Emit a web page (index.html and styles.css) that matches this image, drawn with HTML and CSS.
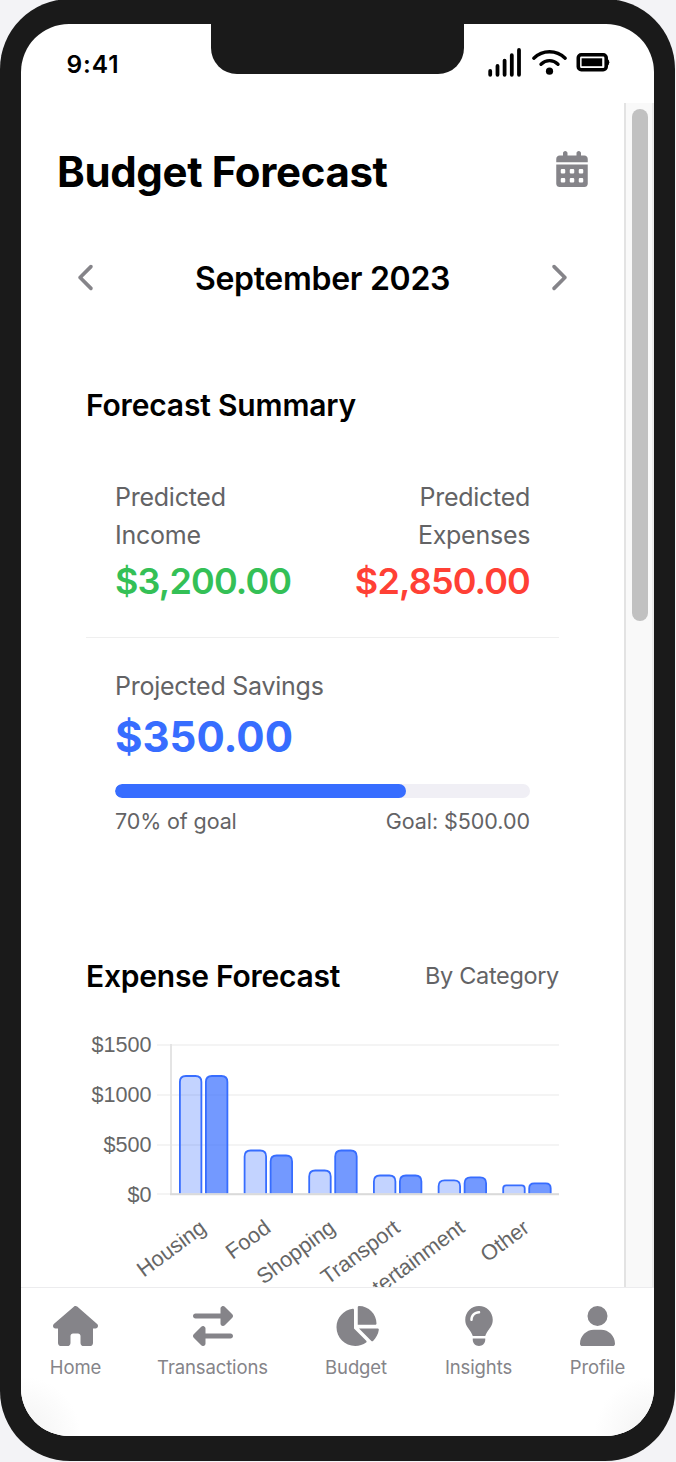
FILE: index.html
```html
<!DOCTYPE html>
<html lang="en">
<head>
<meta charset="utf-8">
<title>Budget Forecast</title>
<link rel="stylesheet" href="styles.css">
</head>
<body>
<div class="phone">
  <div class="screen">
    <div class="notch"></div>
    <header class="status">
      <span class="clock">9:41</span>
      <svg class="status-icons" width="122" height="32" viewBox="488 46 122 32">
        <g stroke="#000" stroke-width="3.8" stroke-linecap="round" fill="none">
          <path d="M490.2 71v3.8M497.5 66v8.8M504.6 60.6v14.2M511.8 55.2v19.6M519 50v24.8"/>
          <path d="M533.8 58.2c9-8.6 22.4-8.6 31.4 0M541 64.2c5-4.8 12-4.8 17 0" stroke-width="3.4"/>
          <rect x="578.3" y="54.8" width="27.9" height="14.9" rx="3" stroke-width="3.6"/>
        </g>
        <circle cx="549.5" cy="71.2" r="3.6"/>
        <rect x="581.6" y="58.3" width="20.6" height="7.9"/>
        <path d="M607 58.500q2.300 1 2.300 3.700t-2.300 3.700z"/>
      </svg>
    </header>

    <div class="viewport">
      <main class="content">
        <div class="title-row">
          <h1 class="title">Budget Forecast</h1>
          <svg class="calendar" viewBox="0 0 448 512"><path fill-rule="evenodd" d="M128 0c17.700 0 32 14.300 32 32v32h128V32c0-17.700 14.300-32 32-32s32 14.300 32 32v32h48c26.500 0 48 21.500 48 48v48H0v-48c0-26.500 21.500-48 48-48h48V32c0-17.700 14.300-32 32-32zM0 192h448v272c0 26.500-21.500 48-48 48H48c-26.500 0-48-21.500-48-48V192zM80 256q-16 0-16 16v32q0 16 16 16h32q16 0 16-16v-32q0-16-16-16zm128 0q-16 0-16 16v32q0 16 16 16h32q16 0 16-16v-32q0-16-16-16zm128 0q-16 0-16 16v32q0 16 16 16h32q16 0 16-16v-32q0-16-16-16zM80 384q-16 0-16 16v32q0 16 16 16h32q16 0 16-16v-32q0-16-16-16zm128 0q-16 0-16 16v32q0 16 16 16h32q16 0 16-16v-32q0-16-16-16zm128 0q-16 0-16 16v32q0 16 16 16h32q16 0 16-16v-32q0-16-16-16z"/></svg>
        </div>

        <div class="month-row">
          <svg class="chevron" viewBox="0 0 256 512"><path d="M9.400 233.400c-12.500 12.500-12.500 32.800 0 45.300l192 192c12.500 12.500 32.800 12.500 45.300 0s12.500-32.800 0-45.300L77.300 256 246.600 86.600c12.500-12.500 12.500-32.800 0-45.300s-32.800-12.500-45.300 0l-192 192z"/></svg>
          <h2 class="month">September 2023</h2>
          <svg class="chevron next" viewBox="0 0 256 512"><path d="M9.400 233.400c-12.500 12.500-12.500 32.800 0 45.300l192 192c12.500 12.500 32.800 12.500 45.300 0s12.500-32.800 0-45.300L77.300 256 246.600 86.600c12.500-12.500 12.500-32.800 0-45.300s-32.800-12.500-45.300 0l-192 192z"/></svg>
        </div>

        <section class="summary">
          <h3 class="heading heading-summary">Forecast Summary</h3>
          <div class="totals">
            <div class="total">
              <div class="label">Predicted<br>Income</div>
              <div class="amount income">$3,200.00</div>
            </div>
            <div class="total total-right">
              <div class="label">Predicted<br>Expenses</div>
              <div class="amount expense">$2,850.00</div>
            </div>
          </div>
          <div class="savings">
            <div class="label">Projected Savings</div>
            <div class="saved">$350.00</div>
            <div class="track"><div class="fill" style="width:70%"></div></div>
            <div class="goal-row"><span class="goal-share">70% of goal</span><span class="goal-total">Goal: $500.00</span></div>
          </div>
        </section>

        <section class="forecast">
          <div class="forecast-head">
            <h3 class="heading heading-expense">Expense Forecast</h3>
            <span class="by">By Category</span>
          </div>
          <svg class="chart" width="473" height="272" viewBox="86 1030 473 272">
            <path d="M157 1045h402M157 1095h402M157 1145h402M157 1194h402" stroke="#f4f4f4" stroke-width="2"/>
            <path d="M171 1044v151" stroke="#e4e4e4" stroke-width="2"/>
            <g class="bar-past" transform="translate(-.3 0)">
              <path d="M180.200 1193.500V1082q0-6 6-6h9.500q6 0 6 6v111.500"/>
              <path d="M244.900 1193.500V1156.500q0-6 6-6h9.500q6 0 6 6v37"/>
              <path d="M309.500 1193.500V1176.500q0-6 6-6h9.500q6 0 6 6v17"/>
              <path d="M374.200 1193.500V1181.500q0-6 6-6h9.500q6 0 6 6v12"/>
              <path d="M438.900 1193.500V1186.300q0-6 6-6h9.500q6 0 6 6v7.200"/>
              <path d="M503.500 1193.500V1188.300q0-3 3-3h15.500q3 0 3 3v5.200"/>
            </g>
            <g class="bar-next" transform="translate(-.3 0)">
              <path d="M206.200 1193.500V1082q0-6 6-6h9.500q6 0 6 6v111.500"/>
              <path d="M270.900 1193.500V1161.500q0-6 6-6h9.500q6 0 6 6v32"/>
              <path d="M335.500 1193.500V1156.500q0-6 6-6h9.500q6 0 6 6v37"/>
              <path d="M400.200 1193.500V1181.500q0-6 6-6h9.500q6 0 6 6v12"/>
              <path d="M464.900 1193.500V1183.300q0-6 6-6h9.500q6 0 6 6v10.200"/>
              <path d="M529.500 1193.500V1188.300q0-5 5-5h11.500q5 0 5 5v5.200"/>
            </g>
            <path d="M170 1194.300h389" stroke="#dadada" stroke-width="2"/>
            <g class="tick" text-anchor="end">
              <text x="151.500" y="1052">$1500</text>
              <text x="151.500" y="1102">$1000</text>
              <text x="151.500" y="1151.500">$500</text>
              <text x="151.500" y="1201.500">$0</text>
              <text transform="translate(202.800 1224.500) rotate(-36.500)" y="7.700">Housing</text>
              <text transform="translate(267.500 1224.500) rotate(-36.500)" y="7.700">Food</text>
              <text transform="translate(332.200 1224.500) rotate(-36.500)" y="7.700">Shopping</text>
              <text transform="translate(396.800 1224.500) rotate(-36.500)" y="7.700">Transport</text>
              <text transform="translate(461.500 1224.500) rotate(-36.500)" y="7.700">Entertainment</text>
              <text transform="translate(526.200 1224.500) rotate(-36.500)" y="7.700">Other</text>
            </g>
          </svg>
        </section>
      </main>
      <div class="scrollbar"><div class="thumb"></div></div>
    </div>

    <nav class="tabs">
      <a class="tab tab-home"><svg width="45" height="40" viewBox="0 0 576 512"><path d="M575.8 255.500c0 18-15 32.100-32 32.100h-32l.7 160.200c0 2.700-.2 5.400-.5 8.100V472c0 22.100-17.900 40-40 40H392c-22.100 0-40-17.900-40-40v-88c0-17.700-14.300-32-32-32h-64c-17.700 0-32 14.300-32 32v88c0 22.100-17.900 40-40 40h-80c-22.100 0-40-17.900-40-40V287.600H32c-18 0-32-14-32-32.100 0-9 3-17 10-24L266.400 8c7-7 15-8 22-8s15 2 21 7l255.400 224.500c8 7 12 15 11 24z"/></svg><span>Home</span></a>
      <a class="tab tab-transactions"><svg width="40" height="40" viewBox="0 0 512 512"><path d="M32 96h320V32c0-12.900 7.800-24.600 19.800-29.600s25.700-2.200 34.900 6.900l96 96c6 6 9.400 14.100 9.400 22.600s-3.400 16.600-9.400 22.600l-96 96c-9.200 9.200-22.900 11.900-34.900 6.900S352 236.900 352 224v-64H32c-17.700 0-32-14.300-32-32s14.300-32 32-32zM480 352c17.700 0 32 14.300 32 32s-14.300 32-32 32H160v64c0 12.900-7.800 24.600-19.800 29.600s-25.700 2.200-34.900-6.900l-96-96c-6-6-9.400-14.100-9.400-22.600s3.400-16.600 9.400-22.600l96-96c9.200-9.200 22.900-11.900 34.900-6.900S160 275.100 160 288v64h320z"/></svg><span>Transactions</span></a>
      <a class="tab tab-budget"><svg width="45" height="40" viewBox="0 0 576 512"><path d="M304 240V16.600c0-9 7-16.600 16-16.600 123.700 0 224 100.300 224 224 0 9-7.600 16-16.600 16H304zM32 272C32 150.700 122.100 50.300 239 34.300c9.200-1.300 17 6.100 17 15.400V288l156.500 156.500c6.700 6.700 6.200 17.700-1.500 23.100C371.800 495.600 323.800 512 272 512 139.500 512 32 404.600 32 272zm526.400 16c9.300 0 16.600 7.800 15.400 17-7.700 55.900-34.600 105.600-73.900 142.300-6 5.600-15.400 5.200-21.200-.7L320 288h238.400z"/></svg><span>Budget</span></a>
      <a class="tab tab-insights"><svg width="30" height="40" viewBox="0 0 384 512"><path d="M272 384c9.600-31.900 29.500-59.100 49.200-86.200 5.200-7.100 10.400-14.200 15.400-21.400 19.800-28.500 31.400-63 31.400-100.300C368 78.800 289.200 0 192 0S16 78.800 16 176c0 37.300 11.600 71.900 31.400 100.300 5 7.200 10.200 14.300 15.400 21.400 19.800 27.100 39.700 54.400 49.200 86.200h160zM192 512c44.200 0 80-35.800 80-80v-16H112v16c0 44.200 35.800 80 80 80zM112 176c0 8.800-7.200 16-16 16s-16-7.200-16-16c0-61.900 50.100-112 112-112 8.800 0 16 7.200 16 16s-7.200 16-16 16c-44.200 0-80 35.800-80 80z"/></svg><span>Insights</span></a>
      <a class="tab tab-profile"><svg width="35" height="40" viewBox="0 0 448 512"><path d="M224 256A128 128 0 1 0 224 0a128 128 0 1 0 0 256zm-45.700 48C79.800 304 0 383.800 0 482.300 0 498.700 13.300 512 29.700 512h388.600c16.400 0 29.700-13.300 29.700-29.700C448 383.800 368.200 304 269.700 304h-91.400z"/></svg><span>Profile</span></a>
    </nav>
  </div>
</div>
</body>
</html>
```
FILE: styles.css
```css
* { box-sizing: border-box; }
html { height: 1462px; overflow: hidden; }
body {
  margin: 0;
  height: 1462px;
  overflow: hidden;
  background: #f3f3f6;
  color: #000;
  font-family: Inter, "Liberation Sans", sans-serif;
}
h1, h2, h3 { margin: 0; }
.phone {
  width: 675px;
  height: 1462px;
  margin-top: -1px;
  padding: 25px 21px;
  border-radius: 70px;
  background: #1a1a1a;
}
.screen {
  position: relative;
  display: flex;
  flex-direction: column;
  height: 1412px;
  border-radius: 48px;
  overflow: hidden;
  background: #fff;
}
.notch {
  position: absolute;
  top: 0;
  left: 190.4px;
  width: 253px;
  height: 50px;
  border-radius: 0 0 26px 26px;
  background: #1a1a1a;
}
.status {
  flex: none;
  display: flex;
  justify-content: space-between;
  height: 79px;
  padding: 22px 44px 0 45.500px;
}
.clock { font-size: 24.5px; line-height: 36px; font-weight: 600; letter-spacing: .9px; }
.status-icons { display: block; }
.viewport { flex: none; display: flex; height: 1184px; overflow: hidden; }
.content { width: 603px; padding: 44px 36px 0; }
.title-row { display: flex; justify-content: space-between; height: 50px; }
.title { font-size: 42px; line-height: 50px; font-weight: 700; letter-spacing: -.36px; white-space: nowrap; }
.calendar { width: 32px; height: 36px; margin-top: 3.500px; fill: #858489; }
.month-row {
  display: flex;
  align-items: center;
  justify-content: space-between;
  height: 40px;
  margin-top: 60px;
  padding: 0 21px;
}
.month { padding-top: 3px; font-size: 32px; line-height: 40px; font-weight: 600; letter-spacing: -.3px; }
.chevron { width: 15px; height: 29px; fill: #858489; }
.next { transform: scaleX(-1); }
.summary { margin: 90px 29px 0; }
.heading { font-size: 30px; line-height: 36px; font-weight: 600; white-space: nowrap; }
.heading-summary { letter-spacing: -.17px; }
.heading-expense { letter-spacing: -.23px; }
.totals {
  display: flex;
  justify-content: space-between;
  height: 160px;
  margin-top: 55px;
  padding: 0 29px;
  border-bottom: 1px solid #efefef;
}
.total-right { text-align: right; }
.label { font-size: 25px; line-height: 38px; letter-spacing: -.25px; color: #636365; }
.amount { margin-top: 4px; font-size: 36px; line-height: 46px; font-weight: 600; letter-spacing: -.85px; }
.total-right .label { margin-right: -.2px; }
.income { color: #34c056; }
.expense { color: #ff4035; }
.savings { padding: 29px 29px 0; }
.saved { margin-top: 7px; font-size: 42px; line-height: 50px; font-weight: 700; color: #376dff; }
.track { height: 14px; margin-top: 22px; border-radius: 7px; background: #f0eff5; overflow: hidden; }
.fill { height: 100%; border-radius: 7px; background: #376dff; }
.goal-row { display: flex; justify-content: space-between; margin-top: 7px; font-size: 21.5px; line-height: 32px; letter-spacing: -.12px; color: #636365; }
.goal-total { letter-spacing: -.04px; }
.forecast { margin: 121px 29px 0; }
.forecast-head { display: flex; justify-content: space-between; height: 36px; }
.by { font-size: 23.5px; line-height: 36px; letter-spacing: -.33px; color: #636365; }
.chart { display: block; margin-top: 36px; }
.bar-past path { fill: #376dff; fill-opacity: .3; stroke: #376dff; stroke-width: 1.8; }
.bar-next path { fill: #376dff; fill-opacity: .7; stroke: #376dff; stroke-width: 1.8; }
.tick { font-family: "Liberation Sans", Arial, sans-serif; font-size: 21.6px; fill: #666; }
.scrollbar {
  width: 30px;
  padding: 6px 0 0 6px;
  border-left: 2px solid #e3e3e3;
  border-right: 2px solid #ebebeb;
  background: #f9f9f9;
}
.thumb { width: 16px; height: 512px; border-radius: 8px; background: #c1c1c1; }
.tabs {
  flex: 1;
  display: flex;
  justify-content: space-around;
  padding: 18px 0 0 1px;
  border-top: 1px solid #ececee;
  background:
    radial-gradient(circle at 0 100%, #f5f5f5 15px, rgba(255,255,255,0) 60px),
    radial-gradient(circle at 100% 100%, #f5f5f5 15px, rgba(255,255,255,0) 60px),
    #fff;
}
.tab { display: flex; flex-direction: column; align-items: center; color: #858489; fill: #858489; font-size: 18.5px; line-height: 24px; letter-spacing: -.12px; white-space: nowrap; }
.tab span { margin-top: 9px; }
.tab-home { width: 50px; }
.tab-transactions { width: 110px; }
.tab-budget { width: 63px; }
.tab-insights { width: 68px; }
.tab-profile { width: 56px; }
```
